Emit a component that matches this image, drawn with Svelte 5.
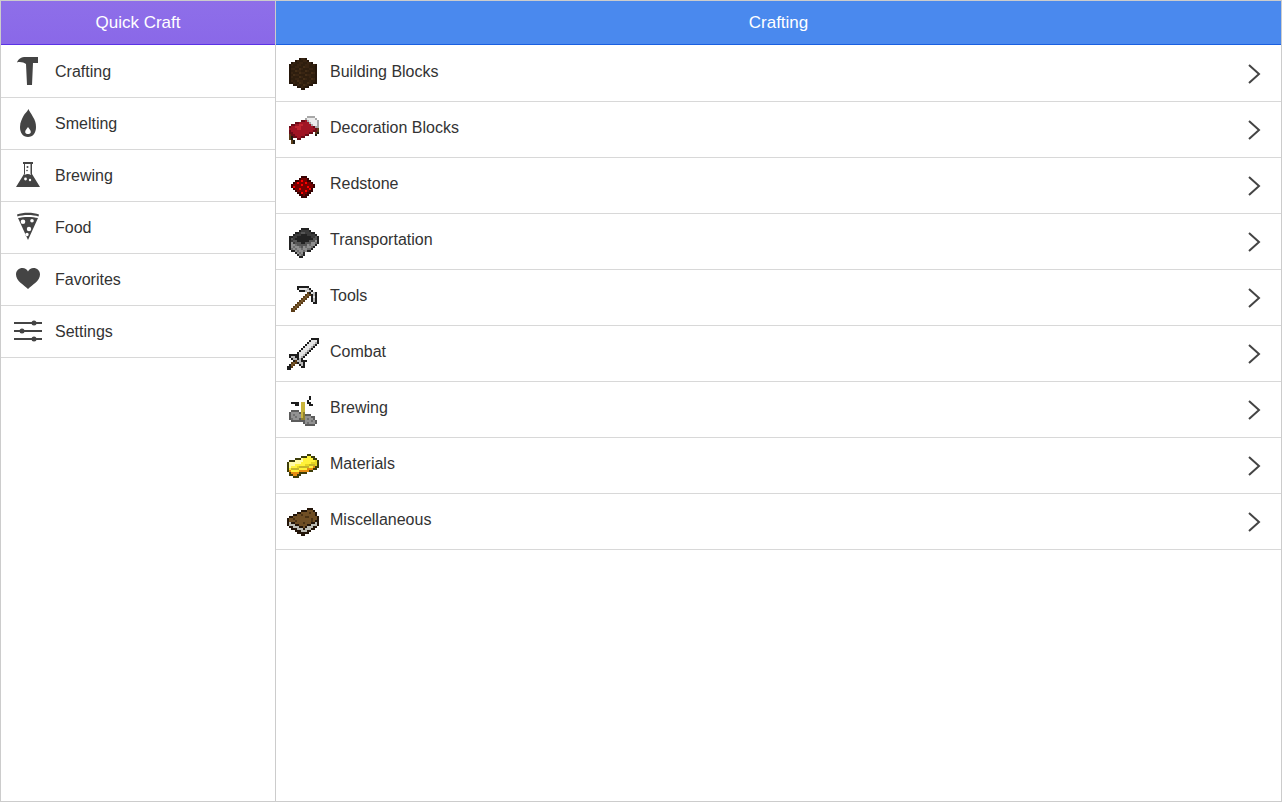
<script>
  const pal = {
    a:'#2e1e0e', b:'#382412', c:'#24160a', e:'#432d16',
    r:'#a01424', R:'#c02430', d:'#6a0c18', w:'#ececec', g:'#a8a8a8', n:'#5a3c18', k:'#1f1a12',
    x:'#360202', y:'#760000', z:'#8c0000', f:'#ff0000',
    K:'#222222', D:'#3a3a3a', L:'#555555', G:'#8f8f8f', H:'#6e6e6e',
    u:'#1c1c1c', s:'#e4e4e4', t:'#b8b8b8', h:'#7a5a2c', m:'#4a3214',
    p:'#c8b43c', P:'#8f8030', v:'#707070', V:'#5c5c5c', q:'#929292',
    A:'#fff23a', l:'#fffba6', o:'#e58c12', O:'#3e3e0a', Y:'#e6d620', Q:'#c4b62a',
    B:'#6f4e24', C:'#4a3214', E:'#24160a', W:'#bcbcb4'
  };
  const side = ['Crafting','Smelting','Brewing','Food','Favorites','Settings'];
  const items = [
    ['Building Blocks',[
      '......cbbc......','....cbaabbc.....','..cbaabbaabbc...','.cbaabbaabbaabc.',
      '.caabbaaebbaaac.','.cbbaaebaaabbac.','.caaebbaaebaaac.','.cbaaaebbaaaebc.',
      '.caebbaaaebbaac.','.cbaaaebaaabaac.','.caabbaaebaaebc.','.cbaaebbaaabaac.',
      '.ccbaaebaaebacc.','...ccbaaebacc...','.....ccbacc.....','.......cc.......']],
    ['Decoration Blocks',[
      '................','..........gggg..','.........gwwwwg.','.......ddrgwwwwg',
      '....ddrrrrrgwwwg','..ddrrRRrrrrgwwg','.drrRRRrrrrrrdgg','.rrrrRRrrrrrrrdn',
      '.drrrrrrrrrrrddn','.ddrrrrrrrrdd.nk','.nddrrrrrdd...k.','.nkddrrdd.......',
      '.nk..dd.........','..nk............','..nk............','................']],
    ['Redstone',[
      '................','................','................','.......xxx......',
      '......xyyyx.....','....xxyfyyxx....','...xyfyyyfyyx...','..xyyyyfyyyyyx..',
      '..xfyyyyyyfyyx..','...xyyfyyyyfx...','....xyyyyfyxx...','.....xxfyyxx....',
      '......xxyxx.....','.......xxx......','................','................']],
    ['Transportation',[
      '................','.......KKKK.....','......KDDDDK....','....KKDLLDDDKK..',
      '...KDDDKKKDDDDK.','.KKDDKKKKKKKDDLK','.KLDKKKKKKKKKLLK','.KDLLKKKKKKLLLGK',
      '.KGDLLLKKLLLGGHK','.KGGHLLLLLGHGGK.','.KGHGGHLGHGGHK..','.KHGHGGHGGHHK...',
      '..KKGHGGHGKK....','....KGHGK.......','.....KGHK.......','......KK........']],
    ['Tools',[
      '................','................','.....uuuuuu.....','.....usssstu....',
      '......uuutstu...','..........nustu.','.........nhnutu.','........nhn.usu.',
      '.......nhn..utu.','......nhn...utu.','.....nhn.....uu.','....nhn.........',
      '...nhn..........','..nhn...........','..nn............','................']],
    ['Combat',[
      '............uuuu','...........usssu','..........usssgu','.........usssgu.',
      '........usssgu..','.......usssgu...','......usssgu....','.....usssgu.....',
      '.uuuuusstu......','.uttuusgu.......','..uttutu........','...unttuuu......',
      '..nhnuttu.......','.uhn..utu.......','uun....uu.......','uu..............']],
    ['Brewing',[
      '................','...........u....','...........u....','..........u.....',
      '..uuuu.pp.uu....','....uu.pp..uu...','.......pp.......','.......pp.......',
      '..VVVV.pp.......','.VqqqqVpP.......','.VqvqqqpPVVV....','.VqqvqqpPqqqVV..',
      '.VvqqqVPPqvqqV..','..VVVVVVVqqqvqV.','........VqvqqqV.','.........VVVVV..']],
    ['Materials',[
      '................','................','..........OO....','.......OOOAAOO..',
      '....OOOlAAAAAOO.','.OOOllllAAAAAAYO','OllllllAAAAAYYYO','OlllAAAAAYYQQQYO',
      'OlAAAYQQQQQAAoOO','OAQQQQAAAAoooOO.','OoAAAAoooooOO...','.OooooOOOO......',
      '.OOooOO.........','...OOO..........','................','................']],
    ['Miscellaneous',[
      '................','..........EEE...','.......EEEBBBE..','.....EEBBBBCBBE.',
      '...EEBBCBBBBBBE.','.EEBBBBBBCCBBBBE','EBBCBBBBBBBBCBBE','EBBBCBBBBBBBCBEE',
      'EWEEBBBBCBBBEEWE','EWWWEEBBBBEEWWWE','.EEWWWEEBEWWWEE.','..EEEWWWEWWWEE..',
      '....EEEWWWEE....','.....EEEEEE.....','.......EE.......','................']]
  ];
  function cells(rows) {
    const out = [];
    rows.forEach((row, y) => {
      [...row].forEach((ch, x) => { if (pal[ch]) out.push({ x, y, c: pal[ch] }); });
    });
    return out;
  }
</script>

<div class="screen">
  <aside class="side">
    <header class="head purple">Quick Craft</header>
    {#each side as label, i}
      <div class="side-row">
        <svg class="side-icon" width="32" height="32" viewBox="0 0 32 32">
          {#if i === 0}
            <path d="M5 7.500C6 4 9 2 14 2L26 2L26 8L21 8L20 30L15 30L14 9C12 7.500 8 6.500 5 7.500Z"/>
          {:else if i === 1}
            <path fill-rule="evenodd" d="M16.500 2C17 4 19 6 21 10C23 13 24 16 24 20C24 26 21 30 16 30C11 30 8 26 8 20C8 15 10 12 12 8C13 6 15 5 16.500 2ZM16 20C14.500 22 13.200 23.500 13.200 25C13.200 26.500 14.500 27 16 27C17.500 27 18.800 26.500 18.800 25C18.800 23.500 17.500 22 16 20Z"/>
          {:else if i === 2}
            <path fill-rule="evenodd" d="M11 3H21V5H20V15L28 28H4L12 15V5H11ZM13 5V14.500L12.500 16C15 14.500 17 15 19 16L18.500 14.500V5Z"/>
            <circle cx="15.500" cy="8" r="1"/>
            <circle cx="15" cy="11.500" r="0.800"/>
            <circle cx="13.500" cy="20" r="1.400" fill="#fff"/>
            <circle cx="18" cy="21" r="1.200" fill="#fff"/>
          {:else if i === 3}
            <path d="M5 3.500C11 1 21 1 27 3.500L26.500 5.500C21 3.500 11 3.500 5.500 5.500Z"/>
            <path fill-rule="evenodd" d="M6 7C11 5.500 21 5.500 26 7L16 29ZM11 8.500A2.300 2.300 0 1 0 11 13.100A2.300 2.300 0 1 0 11 8.500ZM20 8A1.800 1.800 0 1 0 20 11.600A1.800 1.800 0 1 0 20 8ZM17 15.800A2.200 2.200 0 1 0 17 20.200A2.200 2.200 0 1 0 17 15.800ZM15 21.800A1.700 1.700 0 1 0 15 25.200A1.700 1.700 0 1 0 15 21.800Z"/>
          {:else if i === 4}
            <path d="M16 26C12 22 4 18 4 11.500C4 7.500 7 5 10.500 5C13 5 15 6.500 16 8.500C17 6.500 19 5 21.500 5C25 5 28 7.500 28 11.500C28 18 20 22 16 26Z"/>
          {:else}
            <rect x="2" y="7" width="28" height="2"/>
            <rect x="2" y="15" width="28" height="2"/>
            <rect x="2" y="23" width="28" height="2"/>
            <circle cx="22" cy="8" r="2.500"/>
            <circle cx="10" cy="16" r="2.500"/>
            <circle cx="22" cy="24" r="2.500"/>
          {/if}
        </svg>
        <span>{label}</span>
      </div>
    {/each}
  </aside>
  <main class="main">
    <header class="head blue">Crafting</header>
    {#each items as [label, rows]}
      <div class="main-row">
        <svg class="pixel" width="32" height="32" viewBox="0 0 16 16" shape-rendering="crispEdges">
          {#each cells(rows) as p}
            <rect x={p.x} y={p.y} width="1" height="1" fill={p.c}/>
          {/each}
        </svg>
        <span class="label">{label}</span>
        <svg class="chev" width="14" height="22" viewBox="0 0 14 22">
          <path d="M2 2L12 11L2 20" fill="none" stroke="#444" stroke-width="2"/>
        </svg>
      </div>
    {/each}
  </main>
</div>

<style>
  :global(body) { margin: 0; background: #fff; }
  .screen {
    box-sizing: border-box;
    width: 1282px;
    height: 802px;
    display: flex;
    border: 1px solid #ccc;
    font-family: "Liberation Sans", Arial, sans-serif;
    font-size: 16px;
    color: #333;
    overflow: hidden;
  }
  .side {
    box-sizing: content-box;
    width: 274px;
    flex: none;
    border-right: 1px solid #ccc;
  }
  .main { flex: 1; min-width: 0; }
  .head {
    box-sizing: border-box;
    height: 44px;
    margin-bottom: 1px;
    display: flex;
    align-items: center;
    justify-content: center;
    color: #fff;
    font-size: 17px;
  }
  .purple {
    background: linear-gradient(#8e6fe9, #8a68e8);
    border-bottom: 1px solid #5b33e6;
  }
  .blue {
    background: #4a89ee;
    border-bottom: 1px solid #1a5fe0;
  }
  .side-row {
    box-sizing: border-box;
    height: 52px;
    display: flex;
    align-items: center;
    gap: 11px;
    padding: 0 0 1px 11px;
    border-bottom: 1px solid #d8d8d8;
  }
  .side-icon { flex: none; fill: #444; }
  .side-row span { padding-top: 1px; }
  .main-row {
    box-sizing: border-box;
    height: 56px;
    display: flex;
    align-items: center;
    padding: 0 20px 0 11px;
    border-bottom: 1px solid #d8d8d8;
  }
  .pixel { flex: none; margin-right: 11px; }
  .label { flex: 1; padding-bottom: 3px; }
  .chev { flex: none; }
</style>
